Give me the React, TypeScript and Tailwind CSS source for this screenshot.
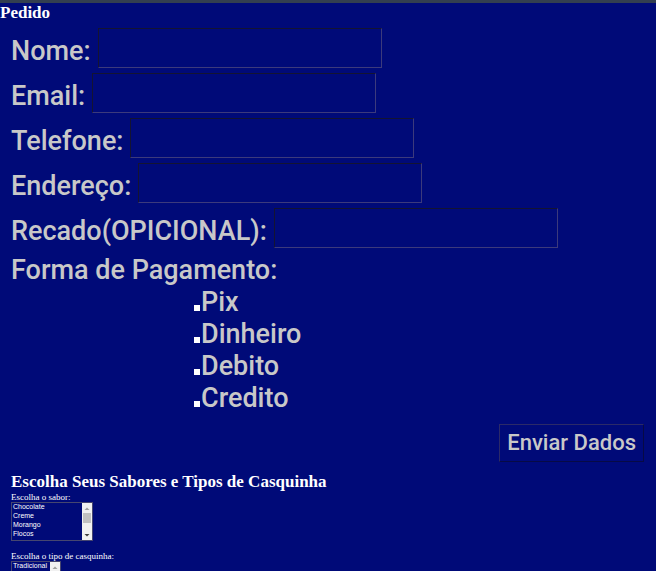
import { useId } from "react";

const fields = [
  { label: "Nome:", name: "nome", type: "text" },
  { label: "Email:", name: "email", type: "email" },
  { label: "Telefone:", name: "telefone", type: "tel" },
  { label: "Endereço:", name: "endereco", type: "text" },
  { label: "Recado(OPICIONAL):", name: "recado", type: "text" },
];

const payments = ["Pix", "Dinheiro", "Debito", "Credito"];

function Field({ label, name, type }: { label: string; name: string; type: string }) {
  const id = useId();
  return (
    <div className="flex items-center gap-[7px]">
      <label htmlFor={id} className="pt-1.5">{label}</label>
      <input
        id={id}
        name={name}
        type={type}
        className="h-10 w-[284px] border border-t-[#141432] border-l-[#141432] border-r-[#3c3a7c] border-b-[#3c3a7c] bg-transparent px-1 outline-none"
      />
    </div>
  );
}

function ListBox({ label, options, width }: { label: string; options: string[]; width: string }) {
  const id = useId();
  return (
    <div className="flex flex-col items-start">
      <label htmlFor={id} className="text-[9px] leading-[10px]">{label}</label>
      <div className="flex h-[39px] border border-[#46466f]">
        <select
          id={id}
          multiple
          size={4}
          className={`${width} h-full overflow-hidden bg-transparent font-['Liberation_Sans',Arial,sans-serif] text-[7px] leading-[9px] outline-none [scrollbar-width:none]`}
        >
          {options.map((o) => (
            <option key={o} className="h-[9px] min-h-0 px-px py-0 leading-[9px]">{o}</option>
          ))}
        </select>
        <div aria-hidden="true" className="flex w-[10px] flex-col items-center bg-[#f1f1f1]">
          <svg viewBox="0 0 10 10" className="size-[10px]"><path d="M2.5 7 5 4.5 7.5 7z" fill="#a0a0a0" /></svg>
          <div className="h-[10px] w-2 bg-[#c1c1c1]" />
          <svg viewBox="0 0 10 10" className="mt-auto size-[10px]"><path d="M2.5 4 5 6.5 7.5 4z" fill="#404040" /></svg>
        </div>
      </div>
    </div>
  );
}

export default function App() {
  return (
    <main className="h-screen overflow-hidden border-t-[3px] border-[#333f50] bg-[#000a78] font-['Liberation_Serif','Times_New_Roman',serif] text-white">
      <h1 className="text-[17px] leading-5 font-bold">Pedido</h1>
      <form
        onSubmit={(e) => e.preventDefault()}
        className="mt-[5px] flex flex-col pr-3 pl-[11px] font-['Roboto',sans-serif] text-[27px] leading-8 font-medium text-[#c8c8c8]"
      >
        <div className="flex flex-col gap-[5px]">
          {fields.map((f) => (
            <Field key={f.name} {...f} />
          ))}
        </div>
        <fieldset className="mt-[6px]">
          <legend>Forma de Pagamento:</legend>
          <div className="ml-[183px] flex flex-col items-start">
            {payments.map((p) => (
              <label key={p} className="flex items-baseline gap-px">
                <input type="checkbox" name="pagamento" value={p} className="size-[6px] appearance-none bg-white" />
                {p}
              </label>
            ))}
          </div>
        </fieldset>
        <button
          type="submit"
          className="mt-[10px] h-[38px] self-end border border-t-[#2b2a68] border-l-[#2b2a68] border-r-[#070a45] border-b-[#070a45] px-[7px] text-[22px] leading-9"
        >
          Enviar Dados
        </button>
      </form>
      <section className="mt-[10px] pl-[11px]">
        <h2 className="text-[17px] leading-5 font-bold">Escolha Seus Sabores e Tipos de Casquinha</h2>
        <div className="flex flex-col gap-[10px]">
          <ListBox label="Escolha o sabor:" width="w-[70px]" options={["Chocolate", "Creme", "Morango", "Flocos"]} />
          <ListBox label="Escolha o tipo de casquinha:" width="w-[38px]" options={["Tradicional"]} />
        </div>
      </section>
    </main>
  );
}
